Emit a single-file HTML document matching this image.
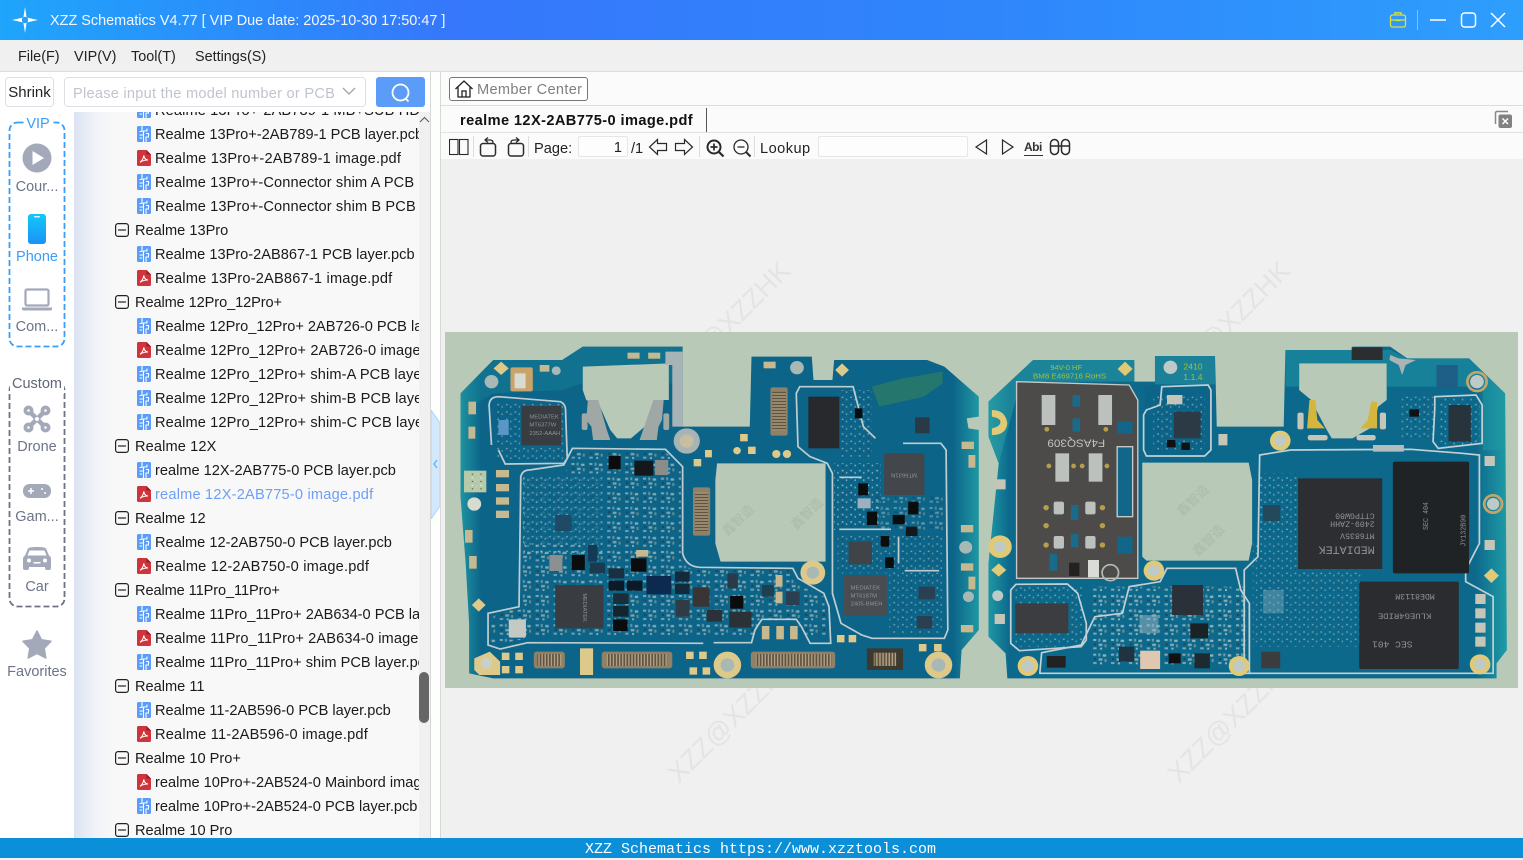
<!DOCTYPE html>
<html><head><meta charset="utf-8"><title>XZZ Schematics</title>
<style>
*{box-sizing:border-box}
html,body{margin:0;padding:0;width:1523px;height:858px;overflow:hidden;background:#f0f0f0;font-family:"Liberation Sans","Noto Sans CJK SC",sans-serif;color:#111}
.a{position:absolute}
.t{position:absolute;white-space:nowrap;line-height:20px}
#title{left:0;top:0;width:1523px;height:40px;background:linear-gradient(90deg,#1fa5fb 0,#3677fb 30%,#2f86fb 65%,#2e9efd 100%)}
#menu{left:0;top:40px;width:1523px;height:32px;background:#f0f0f0;border-bottom:1px solid #dcdcdc}
#menu span{position:absolute;top:7px;font-size:14.4px;line-height:20px;color:#222}
#tree{left:74px;top:112px;width:345px;height:726px;overflow:hidden;background:linear-gradient(90deg,#dbe3f2 0,#f1f3f8 22px,#f8f8f8 40px)}
.r{position:absolute;height:24px;line-height:24px;padding-top:1px;font-size:14.6px;white-space:nowrap;color:#1a1a1a}
.g{left:61px}.f{left:81px}
.p{letter-spacing:.2px}.q{letter-spacing:.12px}
.r svg{position:absolute;top:4px}
.g svg{left:-20px;top:5px}
.f svg{left:-18px}
.lab{position:absolute;left:0;width:74px;text-align:center;font-size:14.5px;line-height:20px;color:#6c7488}
.tb{position:absolute;top:138px;stroke:#2a2a2a;fill:none}
.bd{filter:blur(.35px)}
.wm{position:absolute;white-space:nowrap;font-size:27px;line-height:36px;color:#e4e4e4;transform:rotate(-45deg)}
</style></head><body>
<svg width="0" height="0" style="position:absolute"><defs>
<symbol id="pcb" viewBox="0 0 14 16"><rect width="14" height="16" rx="1.5" fill="#5a9cf6"/><path d="M5 0v5.5H2.5M2.5 9H6.5V5H10M10 2.5V5M6.5 9v7M9 7.5h2.5V11H9V16M2.5 12H5" stroke="#fff" stroke-width="1.1" fill="none"/></symbol>
<symbol id="pdf" viewBox="0 0 14 16"><path d="M1.5 0H9.5L14 4.5V14.500a1.500 1.500 0 0 1-1.500 1.500H1.500A1.500 1.500 0 0 1 0 14.500V1.500A1.500 1.500 0 0 1 1.500 0Z" fill="#cf343c"/><path d="M9.500 0V4.500H14Z" fill="#8f1f26"/><path d="M3 12.300C5 11 6.500 8 6.800 5.500C7.200 8 8.500 9.800 11 10C8.500 10 5.500 10.500 3 12.300Z" stroke="#fff" stroke-width="1.100" fill="none"/></symbol>
<symbol id="min" viewBox="0 0 14 14"><rect x=".6" y=".6" width="12.800" height="12.800" rx="2.500" fill="none" stroke="#222" stroke-width="1.200"/><path d="M3 7h8" stroke="#222" stroke-width="1.200"/></symbol>
<pattern id="c1" width="52" height="44" patternUnits="userSpaceOnUse"><rect x="3" y="3" width="9" height="6" fill="#d9dcd6"/><rect x="18" y="2" width="6" height="9" fill="#aebdc2"/><rect x="31" y="5" width="10" height="7" fill="#e7e5d8"/><rect x="6" y="16" width="6" height="6" fill="#21323e"/><rect x="19" y="17" width="11" height="7" fill="#d6d8d0"/><rect x="36" y="19" width="6" height="9" fill="#b9a98a"/><rect x="3" y="28" width="10" height="6" fill="#c7ced0"/><rect x="23" y="29" width="6" height="6" fill="#e5e6de"/></pattern>
<pattern id="c2" width="25" height="22" patternUnits="userSpaceOnUse"><rect x="2" y="2" width="5" height="4" fill="#dfe3de"/><rect x="14" y="8" width="4" height="5" fill="#c3cdd0"/><rect x="3" y="13" width="3" height="3" fill="#15303e"/></pattern>
<pattern id="st" width="9" height="12" patternUnits="userSpaceOnUse"><rect width="9" height="12" fill="#5f5241"/><rect x="1" y="0" width="4" height="12" fill="#b3a285"/></pattern>
<pattern id="st2" width="12" height="9" patternUnits="userSpaceOnUse"><rect width="12" height="9" fill="#5f5241"/><rect x="0" y="1" width="12" height="4" fill="#b3a285"/></pattern>
<linearGradient id="bd" x1="0" x2="1" y1="0" y2="0"><stop offset="0" stop-color="#1f94a2"/><stop offset=".04" stop-color="#0c6488"/><stop offset=".95" stop-color="#0c6488"/><stop offset="1" stop-color="#1f98a4"/></linearGradient>
<linearGradient id="bd2" x1="0" x2="1" y1="0" y2="0"><stop offset="0" stop-color="#1f98a4"/><stop offset=".04" stop-color="#0d698c"/><stop offset=".94" stop-color="#0d698c"/><stop offset="1" stop-color="#1f9ca6"/></linearGradient>
<clipPath id="cl"><path clip-rule="evenodd" d="M45 190L140 90H340L400 50H690V290H885L890 80H1065L1070 150H1125L1130 90H1400L1450 110L1550 200V260L1515 265L1520 295L1550 300V900L1500 960L1495 1045H140L70 1030V880L60 700L45 500Z
M400 110L650 100V210H620L580 290L540 325H500L480 300L450 230L410 210L400 180Z
M790 400H1105V695H800L785 640V450Z"/></clipPath>
<clipPath id="cr"><path clip-rule="evenodd" d="M10 240V215L140 90H435V155H495V78H670L675 290H870L875 60H1070V50H1180L1230 85H1410L1515 190L1520 960L1490 1000V1045H65L60 970L10 920V700L30 500L40 400L10 320Z
M915 100H1170V210L1145 230 1130 290 1070 325H1010L990 290 950 210 915 180Z
M458 398H768L778 450V640L768 692H470L458 680Z"/></clipPath>
</defs></svg>

<!-- title bar -->
<div id="title" class="a">
<svg class="a" style="left:11px;top:6px" width="28" height="28" viewBox="0 0 28 28"><path d="M14 1L15.600 11.500 27 14 15.600 16.500 14 27 12.400 16.500 1 14 12.400 11.500Z" fill="#fff"/><circle cx="14" cy="14" r="3.200" fill="#2a9bf7"/><circle cx="10" cy="14" r="1" fill="#fff"/><circle cx="18" cy="14" r="1" fill="#fff"/></svg>
<div class="t" style="left:50px;top:11px;font-size:14.450px;color:#f2f6ff">XZZ Schematics V4.77 [ VIP Due date: 2025-10-30 17:50:47 ]</div>
<svg class="a" style="left:1389px;top:11px" width="18" height="18" viewBox="0 0 18 18" fill="none" stroke="#dbe23a" stroke-width="1.300"><rect x="1.500" y="4" width="15" height="12" rx="2"/><path d="M6 4V1.800h6V4M1.500 9h15M6.500 9.500h5"/></svg>
<div class="a" style="left:1417px;top:10px;width:1px;height:20px;background:#7fc0fb"></div>
<svg class="a" style="left:1428px;top:10px" width="84" height="20" viewBox="0 0 84 20" fill="none" stroke="#fff" stroke-width="1.500"><path d="M2 10H18"/><rect x="33.500" y="3" width="14" height="14" rx="3"/><path d="M63 3L77 17M77 3L63 17"/></svg>
</div>

<!-- menu -->
<div id="menu" class="a"><span style="left:18px">File(F)</span><span style="left:74px">VIP(V)</span><span style="left:131px">Tool(T)</span><span style="left:195px">Settings(S)</span></div>

<!-- left header -->
<div class="a" style="left:0;top:72px;width:431px;height:40px;background:#fff"></div>
<div class="a" style="left:5px;top:77px;width:49px;height:30px;border:1px solid #dcdfe6;border-radius:4px;background:#fff;font-size:15px;line-height:30px;text-align:center;color:#222">Shrink</div>
<div class="a" style="left:64px;top:77px;width:302px;height:30px;border:1px solid #dcdfe6;border-radius:4px;background:#fff"></div>
<div class="t" style="left:73px;top:84px;font-size:14.600px;letter-spacing:.25px;color:#c0c4cc">Please input the model number or PCB</div>
<svg class="a" style="left:341px;top:86px" width="16" height="12" viewBox="0 0 16 12" fill="none" stroke="#9ea3ad" stroke-width="1.300"><path d="M2 2L8 8 14 2"/></svg>
<div class="a" style="left:376px;top:77px;width:49px;height:30px;border-radius:3px;background:#5a9cf8"></div>
<svg class="a" style="left:389px;top:82px" width="24" height="22" viewBox="0 0 24 22" fill="none" stroke="#fff" stroke-width="1.800"><circle cx="11.500" cy="10.500" r="8"/><path d="M17 17L19.500 19.500"/></svg>

<!-- sidebar -->
<div class="a" style="left:0;top:112px;width:74px;height:726px;background:#fff"></div>
<svg class="a" style="left:8px;top:121px" width="58" height="227" viewBox="0 0 58 227" fill="none" stroke="#3a9ef8" stroke-width="1.800" stroke-dasharray="6 3"><rect x="1.500" y="1.500" width="55" height="224" rx="8"/></svg>
<svg class="a" style="left:8px;top:381px" width="58" height="227" viewBox="0 0 58 227" fill="none" stroke="#6c7282" stroke-width="1.800" stroke-dasharray="6 3"><rect x="1.500" y="1.500" width="55" height="224" rx="8"/></svg>
<div class="lab" style="left:24px;width:28px;top:114px;color:#3a9ef8;background:#fff">VIP</div>
<div class="lab" style="left:10px;width:54px;top:374px;background:#fff;color:#5f6678">Custom</div>
<svg class="a" style="left:22px;top:143px" width="30" height="30" viewBox="0 0 30 30"><circle cx="15" cy="15" r="14.500" fill="#a3a9b9"/><path d="M10.500 8L22 15 10.500 22Z" fill="#fff"/></svg>
<div class="lab" style="top:177px">Cour...</div>
<svg class="a" style="left:28px;top:214px" width="18" height="30" viewBox="0 0 18 30"><defs><linearGradient id="ph" x1="0" x2="0" y1="0" y2="1"><stop offset="0" stop-color="#12c8f8"/><stop offset="1" stop-color="#1b92f8"/></linearGradient></defs><rect width="18" height="30" rx="3" fill="url(#ph)"/><rect x="6" y="2" width="6" height="1.500" rx=".700" fill="#d6f6ff"/></svg>
<div class="lab" style="top:247px;color:#3a9ef8">Phone</div>
<svg class="a" style="left:22px;top:288px" width="30" height="24" viewBox="0 0 30 24"><rect x="3.500" y="1.500" width="23" height="16" rx="1.500" fill="none" stroke="#a3a9b9" stroke-width="2.200"/><path d="M0 19.500H30V21a1.500 1.500 0 0 1-1.500 1.500H1.500A1.500 1.500 0 0 1 0 21Z" fill="#a3a9b9"/></svg>
<div class="lab" style="top:317px">Com...</div>
<svg class="a" style="left:22px;top:404px" width="30" height="30" viewBox="0 0 30 30" fill="none" stroke="#a3a9b9"><path d="M7 7L23 23M23 7L7 23" stroke-width="4.500"/><circle cx="6.500" cy="6.500" r="5" fill="#a3a9b9" stroke="none"/><circle cx="23.500" cy="6.500" r="5" fill="#a3a9b9" stroke="none"/><circle cx="6.500" cy="23.500" r="5" fill="#a3a9b9" stroke="none"/><circle cx="23.500" cy="23.500" r="5" fill="#a3a9b9" stroke="none"/><circle cx="6.500" cy="6.500" r="1.300" fill="#fff" stroke="none"/><circle cx="23.500" cy="6.500" r="1.300" fill="#fff" stroke="none"/><circle cx="6.500" cy="23.500" r="1.300" fill="#fff" stroke="none"/><circle cx="23.500" cy="23.500" r="1.300" fill="#fff" stroke="none"/><circle cx="15" cy="15" r="2" fill="#fff" stroke="none"/></svg>
<div class="lab" style="top:437px">Drone</div>
<svg class="a" style="left:23px;top:484px" width="28" height="14" viewBox="0 0 28 14"><rect width="28" height="14" rx="6.500" fill="#a3a9b9"/><path d="M5 7h6M8 4v6" stroke="#fff" stroke-width="1.500"/><circle cx="19" cy="5" r="1" fill="#fff"/><circle cx="22" cy="9" r="1" fill="#fff"/></svg>
<div class="lab" style="top:507px">Gam...</div>
<svg class="a" style="left:23px;top:547px" width="28" height="24" viewBox="0 0 28 24"><path d="M5 1.500C6 .500 8 0 14 0S22 .500 23 1.500L26 8.500C27.500 9.500 28 10.500 28 12V21a2 2 0 0 1-2 2H24a2 2 0 0 1-2-2V20H6v1a2 2 0 0 1-2 2H2a2 2 0 0 1-2-2V12C0 10.500.500 9.500 2 8.500Z" fill="#a3a9b9"/><path d="M6.500 3.500H21.500L23.500 8.500H4.500Z" fill="#fff"/><circle cx="6" cy="13.500" r="2" fill="#fff"/><circle cx="22" cy="13.500" r="2" fill="#fff"/><rect x="10.500" y="15" width="7" height="1.500" fill="#fff"/></svg>
<div class="lab" style="top:577px">Car</div>
<svg class="a" style="left:22px;top:630px" width="30" height="29" viewBox="0 0 30 29"><path d="M15 1L19.500 9.800 29 11.300 22.200 18.200 23.800 28 15 23.500 6.200 28 7.800 18.200 1 11.300 10.500 9.800Z" fill="#a3a9b9" stroke="#a3a9b9" stroke-width="1.500" stroke-linejoin="round"/></svg>
<div class="lab" style="top:662px">Favorites</div>

<!-- tree -->
<div id="tree" class="a">
<div class="r f q" style="top:-14px">Realme 13Pro+-2AB789-1 MB+SUB HD<svg width="14" height="16"><use href="#pcb"/></svg></div>
<div class="r f" style="top:10px">Realme 13Pro+-2AB789-1 PCB layer.pcb<svg width="14" height="16"><use href="#pcb"/></svg></div>
<div class="r f p" style="top:34px">Realme 13Pro+-2AB789-1 image.pdf<svg width="14" height="16"><use href="#pdf"/></svg></div>
<div class="r f q" style="top:58px">Realme 13Pro+-Connector shim A PCB<svg width="14" height="16"><use href="#pcb"/></svg></div>
<div class="r f q" style="top:82px">Realme 13Pro+-Connector shim B PCB<svg width="14" height="16"><use href="#pcb"/></svg></div>
<div class="r g" style="top:106px">Realme 13Pro<svg width="14" height="14"><use href="#min"/></svg></div>
<div class="r f" style="top:130px">Realme 13Pro-2AB867-1 PCB layer.pcb<svg width="14" height="16"><use href="#pcb"/></svg></div>
<div class="r f p" style="top:154px">Realme 13Pro-2AB867-1 image.pdf<svg width="14" height="16"><use href="#pdf"/></svg></div>
<div class="r g" style="top:178px;letter-spacing:-.1px">Realme 12Pro_12Pro+<svg width="14" height="14"><use href="#min"/></svg></div>
<div class="r f" style="top:202px">Realme 12Pro_12Pro+ 2AB726-0 PCB layer.pcb<svg width="14" height="16"><use href="#pcb"/></svg></div>
<div class="r f q" style="top:226px">Realme 12Pro_12Pro+ 2AB726-0 image.pdf<svg width="14" height="16"><use href="#pdf"/></svg></div>
<div class="r f q" style="top:250px">Realme 12Pro_12Pro+ shim-A PCB layer.pcb<svg width="14" height="16"><use href="#pcb"/></svg></div>
<div class="r f q" style="top:274px">Realme 12Pro_12Pro+ shim-B PCB layer.pcb<svg width="14" height="16"><use href="#pcb"/></svg></div>
<div class="r f q" style="top:298px">Realme 12Pro_12Pro+ shim-C PCB layer.pcb<svg width="14" height="16"><use href="#pcb"/></svg></div>
<div class="r g q" style="top:322px">Realme 12X<svg width="14" height="14"><use href="#min"/></svg></div>
<div class="r f" style="top:346px">realme 12X-2AB775-0 PCB layer.pcb<svg width="14" height="16"><use href="#pcb"/></svg></div>
<div class="r f p" style="top:370px;color:#6f9ff5">realme 12X-2AB775-0 image.pdf<svg width="14" height="16"><use href="#pdf"/></svg></div>
<div class="r g" style="top:394px">Realme 12<svg width="14" height="14"><use href="#min"/></svg></div>
<div class="r f" style="top:418px">Realme 12-2AB750-0 PCB layer.pcb<svg width="14" height="16"><use href="#pcb"/></svg></div>
<div class="r f p" style="top:442px">Realme 12-2AB750-0 image.pdf<svg width="14" height="16"><use href="#pdf"/></svg></div>
<div class="r g" style="top:466px;letter-spacing:-.1px">Realme 11Pro_11Pro+<svg width="14" height="14"><use href="#min"/></svg></div>
<div class="r f" style="top:490px">Realme 11Pro_11Pro+ 2AB634-0 PCB layer.pcb<svg width="14" height="16"><use href="#pcb"/></svg></div>
<div class="r f q" style="top:514px">Realme 11Pro_11Pro+ 2AB634-0 image.pdf<svg width="14" height="16"><use href="#pdf"/></svg></div>
<div class="r f" style="top:538px">Realme 11Pro_11Pro+ shim PCB layer.pcb<svg width="14" height="16"><use href="#pcb"/></svg></div>
<div class="r g" style="top:562px">Realme 11<svg width="14" height="14"><use href="#min"/></svg></div>
<div class="r f" style="top:586px">Realme 11-2AB596-0 PCB layer.pcb<svg width="14" height="16"><use href="#pcb"/></svg></div>
<div class="r f p" style="top:610px">Realme 11-2AB596-0 image.pdf<svg width="14" height="16"><use href="#pdf"/></svg></div>
<div class="r g" style="top:634px">Realme 10 Pro+<svg width="14" height="14"><use href="#min"/></svg></div>
<div class="r f" style="top:658px">realme 10Pro+-2AB524-0 Mainbord image.pdf<svg width="14" height="16"><use href="#pdf"/></svg></div>
<div class="r f" style="top:682px">realme 10Pro+-2AB524-0 PCB layer.pcb<svg width="14" height="16"><use href="#pcb"/></svg></div>
<div class="r g" style="top:706px">Realme 10 Pro<svg width="14" height="14"><use href="#min"/></svg></div>
</div>
<!-- scrollbar -->
<div class="a" style="left:419px;top:112px;width:11px;height:726px;background:#f0f0f0"></div>
<svg class="a" style="left:419px;top:116px" width="11" height="8" viewBox="0 0 11 8" fill="none" stroke="#555"><path d="M1 6L5.500 1.500 10 6"/></svg>
<div class="a" style="left:419px;top:672px;width:10px;height:51px;border-radius:5px;background:#666"></div>
<!-- splitter -->
<div class="a" style="left:430px;top:72px;width:1px;height:766px;background:#d8d8d8"></div>
<div class="a" style="left:431px;top:72px;width:9px;height:766px;background:#fdfffd"></div>
<svg class="a" style="left:431px;top:410px" width="10" height="109" viewBox="0 0 10 109"><path d="M0 0L9 13V96L0 109Z" fill="#d3e8fd" stroke="#a9d3fb"/><path d="M6 50L3 54 6 58" fill="none" stroke="#5fb0f8" stroke-width="1.300"/></svg>
<div class="a" style="left:440px;top:72px;width:1px;height:766px;background:#d8d8d8"></div>

<!-- right panel -->
<div class="a" style="left:441px;top:72px;width:1082px;height:34px;background:#fbfbfb;border-bottom:1px solid #dcdcdc"></div>
<div class="a" style="left:449px;top:77px;width:139px;height:24px;border:1px solid #777;border-radius:3px;background:#fff"></div>
<svg class="a" style="left:454px;top:79px" width="20" height="20" viewBox="0 0 20 20" fill="none" stroke="#222" stroke-width="1.300"><path d="M1.500 10L10 2 18.500 10M4 8V18H16V8M8 18V12H12V18"/></svg>
<div class="t" style="left:477px;top:80px;font-size:14.600px;letter-spacing:.3px;color:#7f7f7f">Member Center</div>
<div class="a" style="left:441px;top:106px;width:1082px;height:27px;background:#fbfbfb;border-bottom:1px solid #e2e2e2"></div>
<div class="t" style="left:460px;top:111px;font-size:14.600px;letter-spacing:.4px;font-weight:bold;color:#111">realme 12X-2AB775-0 image.pdf</div>
<div class="a" style="left:706px;top:108px;width:1px;height:24px;background:#555"></div>
<svg class="a" style="left:1494px;top:110px" width="19" height="19" viewBox="0 0 19 19"><path d="M14 1.500H3A1.500 1.500 0 0 0 1.500 3V14" fill="none" stroke="#888" stroke-width="1.500"/><rect x="4.500" y="4.500" width="13.500" height="13.500" rx="2" fill="#828282"/><path d="M8.500 8.500L14 14M14 8.500L8.500 14" stroke="#fff" stroke-width="1.500"/></svg>
<div class="a" style="left:441px;top:133px;width:1082px;height:26px;background:#fbfbfb"></div>

<!-- toolbar icons -->
<svg class="tb" style="left:449px" width="20" height="18" viewBox="0 0 20 18" stroke-width="1.100"><rect x=".5" y="1.500" width="8.500" height="15"/><rect x="10.500" y="1.500" width="8.500" height="15"/></svg>
<div class="a" style="left:473px;top:136px;width:1px;height:21px;background:#ddd"></div>
<svg class="tb" style="left:479px;top:137px" width="20" height="20" viewBox="0 0 20 20" stroke-width="1.500"><rect x="1.500" y="6.500" width="15" height="12.500" rx="2.500"/><path d="M14 6.500V5.500Q14 3 11 3H6" stroke-width="1.300"/><path d="M9 .5L6 3 9 5.500" stroke-width="1.300"/></svg>
<svg class="tb" style="left:505px;top:137px" width="20" height="20" viewBox="0 0 20 20" stroke-width="1.500"><rect x="3.500" y="6.500" width="15" height="12.500" rx="2.500"/><path d="M6 6.500V5.500Q6 3 9 3H14" stroke-width="1.300"/><path d="M11 .5L14 3 11 5.500" stroke-width="1.300"/></svg>
<div class="a" style="left:528px;top:136px;width:1px;height:21px;background:#ddd"></div>
<div class="t" style="left:534px;top:139px;font-size:14.600px;color:#222">Page:</div>
<div class="a" style="left:578px;top:136px;width:50px;height:21px;border:1px solid #e6e6e6;border-radius:2px;background:#fdfdfd;font-size:14.600px;line-height:22px;text-align:right;padding-right:5px;color:#222">1</div>
<div class="t" style="left:631px;top:139px;font-size:14.600px;color:#222">/1</div>
<svg class="tb" style="left:648px" width="20" height="18" viewBox="0 0 20 18" stroke-width="1.200"><path d="M9.500 1.500L1.500 9 9.500 16.500V12.500H18.500V5.500H9.500Z"/></svg>
<svg class="tb" style="left:674px" width="20" height="18" viewBox="0 0 20 18" stroke-width="1.200"><path d="M10.500 1.500L18.500 9 10.500 16.500V12.500H1.500V5.500H10.500Z"/></svg>
<div class="a" style="left:699px;top:136px;width:1px;height:21px;background:#ddd"></div>
<svg class="tb" style="left:705px" width="20" height="20" viewBox="0 0 20 20" stroke="#111" stroke-width="2"><circle cx="9" cy="9" r="6.500"/><path d="M14 14L18.500 18.500" stroke-width="2.200"/><path d="M5.500 9h7M9 5.500v7" stroke-width="1.700"/></svg>
<svg class="tb" style="left:732px" width="20" height="20" viewBox="0 0 20 20" stroke-width="1.300"><circle cx="9" cy="9" r="7"/><path d="M14 14L18.500 18.500" stroke-width="2"/><path d="M5.500 9h7"/></svg>
<div class="a" style="left:754px;top:136px;width:1px;height:21px;background:#ddd"></div>
<div class="t" style="left:760px;top:139px;font-size:14.600px;letter-spacing:.45px;color:#222">Lookup</div>
<div class="a" style="left:818px;top:136px;width:150px;height:21px;border:1px solid #e6e6e6;border-radius:2px;background:#fdfdfd"></div>
<svg class="tb" style="left:974px" width="14" height="18" viewBox="0 0 14 18" stroke-width="1.200"><path d="M12.500 2V16L2 9Z"/></svg>
<svg class="tb" style="left:1001px" width="14" height="18" viewBox="0 0 14 18" stroke-width="1.200"><path d="M1.500 2V16L12 9Z"/></svg>
<div class="t" style="left:1024px;top:138px;font-size:12px;font-weight:bold;letter-spacing:-.5px;color:#333;border-bottom:1px solid #333;line-height:18px;height:18px;width:19px">Abi</div>
<svg class="tb" style="left:1049px" width="22" height="18" viewBox="0 0 22 18" stroke-width="1.500"><rect x="1.500" y="1.500" width="8" height="15" rx="4"/><rect x="12.500" y="1.500" width="8" height="15" rx="4"/><path d="M1.500 8H20.500"/></svg>

<!-- viewer -->
<div class="a" style="left:441px;top:159px;width:1082px;height:679px;background:#f0f0f0"></div>
<div class="wm" style="left:643px;top:307px">XZZ@XZZHK</div>
<div class="wm" style="left:1143px;top:307px">XZZ@XZZHK</div>
<div class="wm" style="left:648px;top:701px">XZZ@XZZHK</div>
<div class="wm" style="left:1148px;top:701px">XZZ@XZZHK</div>
<div class="a" style="left:445px;top:332px;width:1073px;height:356px;background:#b9c9b7"></div>

<!-- left board -->
<svg class="a bd" style="left:445px;top:330px" width="540" height="360" viewBox="0 0 1568 1080" preserveAspectRatio="none">
<path fill-rule="evenodd" fill="url(#bd)" d="M45 190L140 90H340L400 50H690V290H885L890 80H1065L1070 150H1125L1130 90H1400L1450 110L1550 200V260L1515 265L1520 295L1550 300V900L1500 960L1495 1045H140L70 1030V880L60 700L45 500Z
M400 110L650 100V210H620L580 290L540 325H500L480 300L450 230L410 210L400 180Z
M790 400H1105V695H800L785 640V450Z"/>
<g clip-path="url(#cl)"><path d="M140 90H340L400 50H690V160H400L340 180L140 190L60 240L45 190Z" fill="#19879c" opacity=".4"/></g>
<path fill="url(#c1)" d="M225 440H345L375 365H640L685 415V690Q700 720 740 720H1000L1020 760L1100 800L1110 925H1050L1020 875H915L890 925H240L135 945V860L225 830Z" opacity=".55"/>
<rect x="230" y="440" width="230" height="200" fill="#0c6488" opacity=".8"/>
<rect x="230" y="440" width="230" height="240" fill="url(#c2)" opacity=".55"/>
<rect x="1130" y="400" width="135" height="200" fill="url(#c2)" opacity=".7"/>
<rect x="1250" y="500" width="200" height="100" fill="url(#c1)" opacity=".4"/>
<rect x="1140" y="610" width="310" height="120" fill="url(#c2)" opacity=".5"/>
<rect x="1290" y="730" width="160" height="180" fill="url(#c2)" opacity=".5"/>
<rect x="150" y="215" width="195" height="175" fill="url(#c2)" opacity=".5"/>
<rect x="1150" y="180" width="90" height="200" fill="url(#c2)" opacity=".55"/>
<path d="M1240 170L1330 145 1445 125V160L1390 200 1260 230Z" fill="#2c7c68" opacity=".8"/>
<g fill="none" stroke="#bfcdd0" stroke-width="5">
<path d="M135 345L128 225Q130 200 155 200L335 215Q350 222 350 240L355 385 345 400 175 402 155 360"/>
<path d="M750 940L240 938 160 957 125 945V850L215 830 220 440Q225 420 245 420L345 405 370 355 640 358 690 410V670Q700 710 740 712L1010 715 1025 745 1100 790 1115 830 1120 940H1060L1035 890 1020 868H920L900 900 890 938H780"/>
<path d="M1250 325L1215 290 1185 170H1030L1020 190 1025 350 1060 380 1110 400 1125 430V790L1150 880 1210 915 1240 925H1450L1460 900 1455 360 1440 340H1330"/>
<path d="M1145 598H1295M1145 442H1210M1335 722H1435M1317 620V700"/>
</g>
<path d="M640 65H690V290H660V105H640Z" fill="#a7b3b4"/>
<circle cx="702" cy="333" r="38" fill="#a8b4b4"/><circle cx="702" cy="333" r="20" fill="#c5bea0"/>
<g fill="#9fa8a4"><path d="M415 210H445L470 300 480 330H430L425 290 410 270Z"/><path d="M605 210H635L630 270 620 290 615 330H565L575 300Z"/><rect x="397" y="250" width="17" height="50" rx="6"/><rect x="634" y="250" width="17" height="50" rx="6"/></g>
<!-- chips -->
<g fill="#393c40"><rect x="222" y="228" width="115" height="118"/><rect x="320" y="765" width="140" height="130"/><rect x="1275" y="370" width="117" height="125" fill="#43474c"/><rect x="1158" y="735" width="125" height="120" fill="#494c50"/><rect x="1172" y="635" width="68" height="68" fill="#404449"/><rect x="1055" y="200" width="90" height="155" fill="#27292d"/></g>
<g fill="#0b0c0e"><rect x="475" y="378" width="35" height="40"/><rect x="550" y="392" width="55" height="45" fill="#15181a"/><rect x="610" y="390" width="38" height="45" fill="#8a8d8a"/><rect x="320" y="555" width="48" height="48" fill="#1f4a66"/><rect x="368" y="675" width="38" height="45"/><rect x="303" y="675" width="38" height="48" fill="#8c9090"/><rect x="415" y="645" width="28" height="50" fill="#153a55"/><rect x="420" y="698" width="45" height="32" fill="#1a3a50"/><rect x="475" y="715" width="45" height="30" fill="#183040"/><rect x="540" y="685" width="45" height="40"/><rect x="475" y="752" width="45" height="30" fill="#0b1a26"/><rect x="528" y="752" width="45" height="30" fill="#0b1a26"/><rect x="585" y="738" width="72" height="55" fill="#0c2a50"/><rect x="668" y="725" width="42" height="30" fill="#122a3a"/><rect x="668" y="762" width="42" height="30" fill="#122a3a"/><rect x="488" y="790" width="45" height="32" fill="#1a2e3a"/><rect x="488" y="828" width="45" height="32" fill="#122632"/><rect x="488" y="868" width="42" height="35"/><rect x="720" y="772" width="48" height="58" fill="#3a3434"/><rect x="670" y="810" width="40" height="50" fill="#2f3c46"/><rect x="828" y="798" width="38" height="38"/><rect x="825" y="845" width="65" height="48" fill="#2a3238"/><rect x="760" y="840" width="45" height="35" fill="#2a3238"/><rect x="820" y="730" width="30" height="45" fill="#2a3a48"/><rect x="990" y="785" width="40" height="40" fill="#2a4050"/><rect x="920" y="765" width="35" height="35" fill="#1f4050"/><rect x="1365" y="262" width="42" height="48" fill="#2a3a44"/><rect x="1190" y="235" width="22" height="30"/><rect x="1200" y="460" width="28" height="36"/><rect x="1225" y="545" width="30" height="40"/><rect x="1300" y="555" width="35" height="28"/><rect x="1345" y="515" width="30" height="38"/><rect x="1338" y="590" width="34" height="28" fill="#15181a"/><rect x="1265" y="618" width="25" height="32"/><rect x="1278" y="682" width="25" height="32"/><rect x="1375" y="770" width="48" height="38" fill="#2a4050"/><rect x="1370" y="858" width="45" height="38" fill="#2a4050"/><rect x="1198" y="505" width="38" height="30" fill="#9cb0c0"/></g>
<!-- connectors -->
<rect x="945" y="172" width="50" height="145" rx="6" fill="#8f8068"/><rect x="950" y="185" width="40" height="118" fill="url(#st2)"/>
<rect x="720" y="472" width="50" height="145" rx="6" fill="#8f8068"/><rect x="726" y="488" width="38" height="115" fill="url(#st2)"/>
<rect x="455" y="965" width="205" height="50" rx="8" fill="#8f8068"/><rect x="470" y="972" width="175" height="36" fill="url(#st)"/>
<rect x="888" y="965" width="245" height="50" rx="8" fill="#8f8068"/><rect x="900" y="972" width="222" height="36" fill="url(#st)"/>
<rect x="258" y="965" width="90" height="50" rx="8" fill="#8f8068"/><rect x="268" y="972" width="70" height="36" fill="url(#st)"/>
<rect x="1225" y="955" width="105" height="65" fill="#3c3a30"/><rect x="1245" y="968" width="65" height="40" fill="url(#st)"/>
<!-- gold -->
<g fill="#ddc98a"><rect x="392" y="955" width="38" height="80"/><rect x="165" y="968" width="22" height="22"/><rect x="204" y="968" width="22" height="22"/><rect x="165" y="1008" width="22" height="22"/><rect x="204" y="1008" width="22" height="22"/><rect x="700" y="965" width="22" height="22"/><rect x="738" y="965" width="22" height="22"/><rect x="710" y="1012" width="22" height="22"/><rect x="748" y="1012" width="22" height="22"/><rect x="857" y="312" width="22" height="22"/><rect x="880" y="350" width="22" height="22"/><circle cx="848" cy="362" r="11"/><rect x="755" y="360" width="20" height="22"/><rect x="722" y="387" width="22" height="22"/><circle cx="962" cy="372" r="12"/><circle cx="993" cy="372" r="12"/><rect x="1138" y="915" width="22" height="22"/><rect x="1172" y="915" width="22" height="22"/><rect x="1376" y="942" width="22" height="22"/><rect x="1420" y="942" width="22" height="22"/><circle cx="1068" cy="728" r="36"/><circle cx="820" cy="1005" r="40"/><circle cx="1433" cy="1005" r="40"/><path d="M85 985L130 965 160 995V1035H100L85 1020Z"/><path d="M163 95L185 115 163 135 141 115Z"/><path d="M1153 100L1173 120 1153 140 1133 120Z"/><path d="M98 805L118 825 98 845 78 825Z"/></g>
<g fill="#a8b8b4"><circle cx="1068" cy="728" r="18"/><circle cx="820" cy="1005" r="20"/><circle cx="1433" cy="1005" r="20"/><circle cx="120" cy="1000" r="16" fill="#c9cfc9"/><circle cx="85" cy="522" r="20" fill="#d8dcd0"/><circle cx="135" cy="155" r="20"/><circle cx="323" cy="122" r="13"/><circle cx="1022" cy="113" r="20"/><circle cx="1512" cy="652" r="19"/><circle cx="1520" cy="800" r="16"/></g>
<rect x="55" y="422" width="65" height="65" fill="#b7c9a8"/><rect x="62" y="430" width="50" height="50" fill="url(#c2)"/>
<rect x="190" y="112" width="65" height="72" rx="6" fill="#c9a36a"/><rect x="202" y="130" width="32" height="45" fill="#d8dcd0"/>
<rect x="185" y="868" width="50" height="55" rx="5" fill="#c5c9c4"/>
<rect x="155" y="270" width="30" height="45" fill="#5a96c8"/>
<g fill="#c7b98f"><rect x="68" y="215" width="22" height="38"/><rect x="68" y="290" width="20" height="36"/><rect x="148" y="420" width="38" height="22"/><rect x="148" y="462" width="38" height="22"/><rect x="148" y="502" width="38" height="22"/><rect x="148" y="542" width="38" height="22"/><rect x="58" y="600" width="22" height="38"/><rect x="70" y="678" width="22" height="38"/><rect x="275" y="105" width="28" height="20"/><rect x="530" y="68" width="35" height="18"/><rect x="590" y="68" width="35" height="18"/><rect x="925" y="95" width="35" height="20"/><rect x="1500" y="335" width="36" height="22"/><rect x="1520" y="375" width="20" height="38"/><rect x="1498" y="585" width="36" height="22"/><rect x="1498" y="700" width="36" height="22"/><rect x="1520" y="740" width="20" height="38"/><rect x="1498" y="885" width="36" height="22"/><rect x="920" y="888" width="22" height="40"/><rect x="962" y="888" width="22" height="40"/><rect x="1002" y="888" width="22" height="40"/><rect x="960" y="735" width="20" height="35"/><rect x="960" y="785" width="20" height="35"/><rect x="555" y="660" width="35" height="20"/></g>
<g font-family="Liberation Sans,sans-serif" font-size="17" fill="#8f9499"><text x="245" y="265">MEDIATEK</text><text x="245" y="290">MT6377W</text><text x="245" y="315">2352-AAAH</text><text x="1178" y="778">MEDIATEK</text><text x="1178" y="802">MT6187M</text><text x="1178" y="826">2405-BMEH</text><text transform="rotate(90 400 790)" x="400" y="790">MEDIATEK</text><text transform="rotate(180 1335 430)" x="1300" y="430">MT6631N</text></g>
<g font-family="Liberation Sans,Noto Sans CJK SC,sans-serif" font-size="38" fill="#abbaa9"><text transform="rotate(-45 820 620)" x="820" y="620">鑫智造</text><text transform="rotate(-45 1020 600)" x="1020" y="600">鑫智造</text></g>
</svg>

<!-- right board -->
<svg class="a bd" style="left:985px;top:330px" width="538" height="360" viewBox="0 0 1567 1080" preserveAspectRatio="none">
<path fill-rule="evenodd" fill="url(#bd2)" d="M10 240V215L140 90H435V155H495V78H670L675 290H870L875 60H1070V50H1180L1230 85H1410L1515 190L1520 960L1490 1000V1045H65L60 970L10 920V700L30 500L40 400L10 320Z
M915 100H1170V210L1145 230 1130 290 1070 325H1010L990 290 950 210 915 180Z
M458 398H768L778 450V640L768 692H470L458 680Z"/>
<g clip-path="url(#cr)"><path d="M140 90H435V155H92V200L40 400 10 320V215Z" fill="#2ba0a6" opacity=".5"/>
<path d="M875 60H1180L1230 85H1410L1515 190V360H1450V170H875Z" fill="#1f9aa4" opacity=".5"/>
<rect x="495" y="78" width="175" height="85" fill="#2ba0a6" opacity=".45"/></g>
<!-- sim tray -->
<path d="M92 155L420 165 445 210V745H92Z" fill="#4c4b49"/>
<rect x="385" y="350" width="45" height="210" fill="#11668a"/><rect x="385" y="275" width="45" height="35" fill="#11668a"/><rect x="385" y="620" width="45" height="50" fill="#11668a"/>
<g fill="none" stroke="#c4c9c8" stroke-width="4"><path d="M92 155L420 165 445 210V745H92Z"/><path d="M385 350H430V560H385Z"/></g>
<g fill="#bcc1be"><rect x="165" y="195" width="40" height="90"/><rect x="330" y="195" width="40" height="90"/><rect x="205" y="370" width="40" height="85"/><rect x="302" y="370" width="40" height="85"/><rect x="200" y="515" width="30" height="38" rx="6"/><rect x="292" y="515" width="30" height="38" rx="6"/><rect x="200" y="618" width="30" height="38" rx="6"/><rect x="292" y="618" width="30" height="38" rx="6"/></g>
<g fill="#1a6a8c"><rect x="255" y="195" width="22" height="35"/><rect x="255" y="265" width="22" height="40"/><rect x="250" y="525" width="22" height="45"/><rect x="250" y="612" width="22" height="40"/><rect x="188" y="672" width="22" height="50"/><rect x="245" y="698" width="30" height="40" fill="#222"/></g>
<g fill="#b79f4a"><circle cx="180" cy="298" r="7"/><circle cx="352" cy="298" r="7"/><circle cx="186" cy="408" r="7"/><circle cx="258" cy="408" r="7"/><circle cx="283" cy="408" r="7"/><circle cx="355" cy="408" r="7"/><circle cx="178" cy="533" r="8"/><circle cx="342" cy="533" r="8"/><circle cx="178" cy="587" r="8"/><circle cx="342" cy="587" r="8"/><circle cx="178" cy="645" r="8"/><circle cx="342" cy="645" r="8"/></g>
<text transform="rotate(180 275 340)" x="200" y="352" font-family="Liberation Sans,sans-serif" font-size="34" fill="#c2c2bc">F4ASQ309</text>
<circle cx="365" cy="728" r="24" fill="none" stroke="#b5bab7" stroke-width="5"/><rect x="300" y="690" width="32" height="52" fill="#dadcd8"/>
<!-- small modules -->
<rect x="465" y="165" width="195" height="212" fill="#0c6488"/>
<rect x="85" y="770" width="200" height="180" fill="url(#c2)" opacity=".5"/>
<rect x="490" y="190" width="150" height="170" fill="url(#c2)" opacity=".5"/>
<rect x="1320" y="205" width="120" height="140" fill="url(#c2)" opacity=".55"/>
<rect x="1210" y="200" width="95" height="130" fill="url(#c2)" opacity=".5"/>
<rect x="310" y="770" width="450" height="240" fill="url(#c1)" opacity=".6"/>
<rect x="800" y="430" width="110" height="200" fill="url(#c2)" opacity=".55"/>
<rect x="780" y="640" width="320" height="310" fill="url(#c2)" opacity=".5"/>
<rect x="810" y="780" width="60" height="70" fill="#8faebc" opacity=".4"/>
<rect x="450" y="855" width="55" height="55" fill="#9db8c4" opacity=".5"/>
<g fill="none" stroke="#c2d0d3" stroke-width="5">
<path d="M470 240L510 225 515 170 650 165 658 180V360L640 378 470 378 462 360V255Z"/>
<path d="M750 1030H1480L1480 985V800L1400 755V720L1440 640V375L1390 370 1240 358 890 360 800 375 795 680 755 720V1030"/>
<path d="M1310 235L1310 200 1430 195 1448 225V340L1320 355 1305 335Z"/>
<path d="M75 780L90 763 240 762 270 790 295 880V930L280 950 100 962 75 940Z"/>
<path d="M160 1025L165 968 280 945 320 860 400 850 420 770 510 755 530 715 730 715 745 780 770 820V1030H160Z"/>
</g>
<!-- chips -->
<g fill="#2c2e31"><rect x="912" y="445" width="245" height="272"/><rect x="1188" y="395" width="222" height="335" rx="6" fill="#202326"/><rect x="1090" y="755" width="290" height="262" rx="5" fill="#2a2c30"/><rect x="88" y="820" width="155" height="90" fill="#3b3d41"/><rect x="550" y="245" width="78" height="80" fill="#2b3a44"/><rect x="545" y="765" width="90" height="90" fill="#2b3138"/><rect x="598" y="880" width="52" height="45" fill="#1b2226"/><rect x="805" y="965" width="55" height="50" fill="#3a3c3e"/><rect x="1350" y="225" width="65" height="110" fill="#27343c"/><rect x="810" y="525" width="50" height="48" fill="#224a5a"/><rect x="180" y="978" width="55" height="35" fill="#222"/><rect x="390" y="950" width="45" height="45" fill="#1f3340"/><rect x="610" y="970" width="45" height="45" fill="#1f2a30"/><rect x="535" y="970" width="35" height="30" fill="#111"/><rect x="530" y="330" width="25" height="22" fill="#111"/><rect x="572" y="338" width="25" height="22" fill="#111"/><rect x="1236" y="238" width="28" height="22" fill="#111"/></g>
<g font-family="Liberation Mono,monospace" font-size="24" fill="#8f9296"><text transform="rotate(180 1020 540)" x="905" y="530">CTTPGW80</text><text transform="rotate(180 1020 575)" x="905" y="575">2409-ZAHH</text><text transform="rotate(180 1020 610)" x="905" y="610">MT6835V</text><text transform="rotate(180 1030 650)" x="925" y="650" font-size="34">MEDIATEK</text><text transform="rotate(180 1225 800)" x="1140" y="808">MDE8113M</text><text transform="rotate(180 1220 860)" x="1140" y="870" font-size="26">KLUEG4RIDE</text><text transform="rotate(180 1195 940)" x="1145" y="945" font-size="28">SEC 401</text><text transform="rotate(-90 1280 570)" x="1250" y="580" font-size="20">SEC 404</text><text transform="rotate(-90 1340 560)" x="1250" y="620" font-size="20">JY132B90</text></g>
<g font-family="Liberation Sans,sans-serif" fill="#a0c040" font-size="25"><text x="140" y="146" font-size="23">BM8 E469716 RoHS</text><text x="190" y="120" font-size="22">94V-0  HF</text><text x="578" y="118">2410</text><text x="578" y="150">1.1.4</text></g>
<!-- gold & holes -->
<g fill="#e0c977"><circle cx="860" cy="332" r="30"/><circle cx="492" cy="722" r="30"/><circle cx="125" cy="1008" r="30"/><circle cx="740" cy="1008" r="30"/><circle cx="1442" cy="1003" r="30"/><circle cx="44" cy="650" r="34"/><path d="M408 95L430 117 408 138 386 117Z"/><path d="M40 700L62 720 40 740 18 720Z"/><path d="M1475 715L1497 737 1475 759 1453 737Z"/><path d="M20 240Q60 240 65 280 62 315 20 315V295Q45 290 45 275 45 265 20 260Z"/><path d="M945 210H962L968 270 990 295H938Z" fill="#d6b53c"/><path d="M1125 215H1142V295H1093L1115 270Z" fill="#d6b53c"/></g>
<g fill="#bdcac8"><circle cx="860" cy="332" r="17"/><circle cx="492" cy="722" r="17"/><circle cx="125" cy="1008" r="17"/><circle cx="740" cy="1008" r="17"/><circle cx="1442" cy="1003" r="17"/><circle cx="44" cy="650" r="17"/><circle cx="540" cy="112" r="20"/><circle cx="37" cy="797" r="16"/><circle cx="1433" cy="155" r="20"/><circle cx="1480" cy="522" r="18"/></g>
<g fill="none" stroke="#c3a56a" stroke-width="8"><circle cx="1433" cy="155" r="28"/><circle cx="1480" cy="522" r="26"/></g>
<rect x="1068" y="52" width="90" height="38" fill="#2c2d30"/>
<rect x="1315" y="105" width="62" height="70" fill="#1d5f86"/>
<path d="M1180 75L1205 85 1255 90 1225 105 1215 135 1205 105 1178 90Z" fill="#aab4b4"/>
<path d="M1130 345L1220 345V365H1130Z" fill="#b3bdbd"/>
<g fill="#c6c6b8"><rect x="1455" y="378" width="30" height="30"/><rect x="1455" y="630" width="30" height="30"/><rect x="30" y="448" width="30" height="30"/><rect x="28" y="852" width="30" height="30"/><rect x="1428" y="792" width="30" height="30"/><rect x="1428" y="835" width="30" height="30"/><rect x="1428" y="878" width="30" height="30"/><rect x="1428" y="920" width="30" height="30"/><rect x="680" y="312" width="26" height="34"/><rect x="940" y="315" width="58" height="16" rx="7"/><rect x="1082" y="315" width="56" height="16" rx="7"/><rect x="910" y="248" width="18" height="50" rx="6"/><rect x="1150" y="248" width="18" height="50" rx="6"/><rect x="530" y="195" width="45" height="28"/></g>
<rect x="452" y="962" width="58" height="55" fill="#dfc7b0"/>
<g font-family="Liberation Sans,Noto Sans CJK SC,sans-serif" font-size="38" fill="#abbaa9"><text transform="rotate(-45 575 560)" x="575" y="560">鑫智造</text><text transform="rotate(-45 620 680)" x="620" y="680">鑫智造</text></g>
</svg>

<!-- footer -->
<div class="a" style="left:0;top:838px;width:1523px;height:20px;background:#0c8fd9"></div>
<div class="t" style="left:585px;top:840px;font-family:'Liberation Mono',monospace;font-size:15px;line-height:20px;color:#fff">XZZ Schematics https://www.xzztools.com</div>
</body></html>
